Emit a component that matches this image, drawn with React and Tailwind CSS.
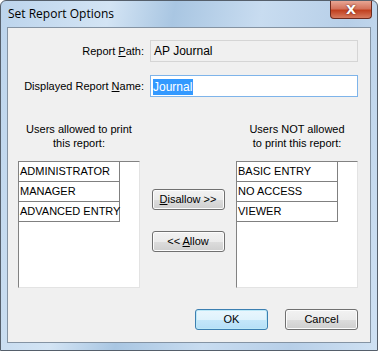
const allowed = ["ADMINISTRATOR", "MANAGER", "ADVANCED ENTRY"];
const denied = ["BASIC ENTRY", "NO ACCESS", "VIEWER"];

function UserList({ users }) {
  return (
    <div className="w-[122px] h-[127px] bg-white border-t border-l border-t-[#828282] border-l-[#828282] border-r border-b border-r-[#e3e3e3] border-b-[#e3e3e3]">
      <div className="w-[101px] border-r border-[#808080]">
        {users.map((u) => (
          <div
            key={u}
            className="h-[20px] border-b border-[#808080] pl-[1px] leading-[19px] whitespace-nowrap"
          >
            {u}
          </div>
        ))}
      </div>
    </div>
  );
}

function Btn({ children, primary }) {
  return (
    <button
      className={`h-[21px] w-[73px] rounded-[3px] border text-[11px] leading-[19px] text-black ${
        primary
          ? "border-[#3c7fb1] bg-[linear-gradient(to_bottom,#e9f6fd_0%,#dff2fc_50%,#c4e7fa_51%,#b5dff7_100%)] shadow-[inset_0_0_0_1px_#bce8f7]"
          : "border-[#707070] bg-[linear-gradient(to_bottom,#f2f2f2_0%,#ebebeb_50%,#dddddd_51%,#cfcfcf_100%)] shadow-[inset_0_0_0_1px_#fcfcfc]"
      }`}
    >
      {children}
    </button>
  );
}

export default function App() {
  return (
    <div className="w-[378px] h-[351px] relative overflow-hidden bg-[linear-gradient(100deg,#bcd4ec_0%,#d3e4f4_25%,#a9c6e2_40%,#c8dcf0_60%,#b7cfe8_80%,#cfe1f3_100%)] border border-[#555f6b] rounded-t-[6px] font-['Liberation_Sans',Arial,sans-serif] text-[11px] text-black flex flex-col">
      {/* title bar */}
      <div className="h-[26px] flex items-start justify-between pl-[7px]">
        <span className="mt-[5px] text-[12px] leading-[15px] font-['Open_Sans','Noto_Sans',sans-serif] text-black">
          Set Report Options
        </span>
        <div className="mr-[5px] w-[42px] h-[18px] rounded-b-[4px] border border-t-0 border-[#6d2a1e] bg-[linear-gradient(to_bottom,#e8a593_0%,#d4735c_45%,#c1401f_55%,#d77b5f_100%)] flex items-center justify-center">
          <span className="text-white font-bold text-[13px] leading-none font-['DejaVu_Sans',sans-serif] [text-shadow:0_0_2px_#5a1a0c]">
            X
          </span>
        </div>
      </div>

      {/* client area */}
      <div className="mx-[6px] mb-[7px] flex-1 border border-[#8493a3] bg-[#f0f0f0] pl-[10px] pr-[12px] pt-[12px] flex flex-col">
        <div className="flex items-center h-[22px]">
          <div className="w-[126px] text-right">
            Report <span className="underline">P</span>ath:
          </div>
          <div className="ml-[6px] w-[208px] h-[22px] border border-[#d5d5d5] bg-[#f0f0f0] pl-[3px] leading-[20px] text-[12px]">
            AP Journal
          </div>
        </div>
        <div className="flex items-center h-[22px] mt-[13px]">
          <div className="w-[126px] text-right">
            Displayed Report <span className="underline">N</span>ame:
          </div>
          <div className="ml-[6px] w-[208px] h-[22px] border border-[#7eb4ea] bg-white pl-[2px] pt-[2px] text-[12px]">
            <span className="bg-[#3399ff] text-white leading-[16px] inline-block pr-[1px]">
              Journal
            </span>
          </div>
        </div>

        <div className="flex mt-[24px] gap-[12px]">
          <div className="w-[122px] flex flex-col">
            <div className="text-center leading-[14px] h-[40px] pt-[1px]">
              Users allowed to print
              <br />
              this report:
            </div>
            <UserList users={allowed} />
          </div>
          <div className="w-[72px] flex flex-col items-center pt-[68px] gap-[21px]">
            <Btn>
              <span className="underline">D</span>isallow &gt;&gt;
            </Btn>
            <Btn>
              &lt;&lt; <span className="underline">A</span>llow
            </Btn>
          </div>
          <div className="w-[122px] flex flex-col">
            <div className="text-center leading-[14px] h-[40px] pt-[1px]">
              Users NOT allowed
              <br />
              to print this report:
            </div>
            <UserList users={denied} />
          </div>
        </div>

        <div className="flex justify-end gap-[17px] mt-[21px]">
          <Btn primary>OK</Btn>
          <Btn>Cancel</Btn>
        </div>
      </div>
    </div>
  );
}
